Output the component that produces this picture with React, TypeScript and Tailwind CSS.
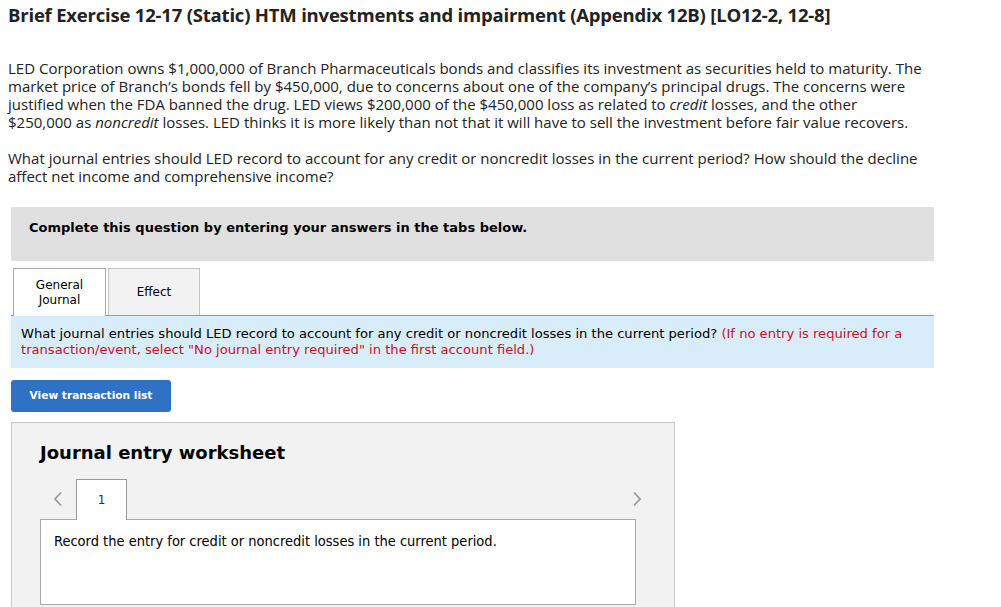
import React from "react";

const sans = "font-['Open_Sans',sans-serif]";
const verdana = "font-['DejaVu_Sans',Verdana,sans-serif]";

const ChevronLeft = () => (
  <svg width="10" height="16" viewBox="0 0 10 16" fill="none">
    <path d="M8 1.5L2 8l6 6.5" stroke="#9a9a9a" strokeWidth="1.8" />
  </svg>
);

const ChevronRight = () => (
  <svg width="10" height="16" viewBox="0 0 10 16" fill="none">
    <path d="M2 1.5L8 8l-6 6.5" stroke="#9a9a9a" strokeWidth="1.8" />
  </svg>
);

export default function App() {
  return (
    <div className="min-h-[607px] bg-white text-[#222] overflow-hidden">
      <div className="pl-2">
        <h1 className={`${sans} text-[18.5px] font-bold leading-[24px] pt-[3px] tracking-[-0.2px] whitespace-nowrap`}>
          Brief Exercise 12-17 (Static) HTM investments and impairment (Appendix 12B) [LO12-2, 12-8]
        </h1>

        <p className={`${sans} text-[15px] leading-[18px] mt-[32px] whitespace-nowrap`}>
          LED Corporation owns $1,000,000 of Branch Pharmaceuticals bonds and classifies its investment as securities held to maturity. The
          <br />
          market price of Branch’s bonds fell by $450,000, due to concerns about one of the company’s principal drugs. The concerns were
          <br />
          justified when the FDA banned the drug. LED views $200,000 of the $450,000 loss as related to <i>credit</i> losses, and the other
          <br />
          $250,000 as <i>noncredit</i> losses. LED thinks it is more likely than not that it will have to sell the investment before fair value recovers.
        </p>

        <p className={`${sans} text-[15px] leading-[18px] mt-[18px] whitespace-nowrap`}>
          What journal entries should LED record to account for any credit or noncredit losses in the current period? How should the decline
          <br />
          affect net income and comprehensive income?
        </p>
      </div>

      <div className="pl-[11px] w-[934px] mt-[22px]">
        <div className={`${verdana} bg-[#e0e0e0] h-[54px] pl-[18px] pt-[13px] text-[13px] leading-[16px] font-bold text-black`}>
          Complete this question by entering your answers in the tabs below.
        </div>

        <div className="flex mt-[7px] pl-[2px] gap-[2px]">
          <div className={`${verdana} w-[93px] h-[48px] bg-white border border-b-0 border-[#aaa] flex items-center justify-center text-center text-[12px] leading-[15px] text-black -mb-px relative z-10`}>
            General
            <br />
            Journal
          </div>
          <div className={`${verdana} w-[92px] h-[47px] bg-[#f2f2f2] border border-b-0 border-[#c4c4c4] flex items-center justify-center text-[12px] text-black`}>
            Effect
          </div>
        </div>

        <div className={`${verdana} bg-[#d9ecf9] border-t border-[#999] h-[53px] pl-[10px] pt-[10px] text-[13.1px] leading-[16px] text-black whitespace-nowrap`}>
          What journal entries should LED record to account for any credit or noncredit losses in the current period?{" "}
          <span className="text-[#c8102e]">
            (If no entry is required for a
            <br />
            transaction/event, select "No journal entry required" in the first account field.)
          </span>
        </div>

        <button className={`${verdana} mt-[12px] w-[160px] h-[32px] rounded-[3px] bg-[#2f72c4] text-white text-[10.6px] font-bold`}>
          View transaction list
        </button>

        <div className="mt-[10px] w-[664px] h-[200px] bg-[#f2f2f2] border border-[#c8c8c8] pl-[28px] pr-[38px]">
          <div className={`${verdana} text-[18px] font-bold text-black mt-[18px] leading-[24px]`}>
            Journal entry worksheet
          </div>

          <div className="flex items-end mt-[14px]">
            <div className="w-[36px] h-[40px] flex items-center justify-center">
              <ChevronLeft />
            </div>
            <div className={`${verdana} w-[51px] h-[41px] bg-white border border-b-0 border-[#999] flex items-center justify-center text-[12px] text-[#1a2a6a] -mb-px relative z-10`}>
              1
            </div>
            <div className="flex-1" />
            <div className="w-[14px] h-[40px] flex items-center justify-center -mr-[8px]">
              <ChevronRight />
            </div>
          </div>

          <div className="bg-white border border-[#aaa] h-[86px] pl-[13px] pt-[12px]">
            <div className="font-['DejaVu_Sans_Condensed','DejaVu_Sans',Tahoma,sans-serif] text-[14.5px] leading-[18px] text-black">
              Record the entry for credit or noncredit losses in the current period.
            </div>
          </div>
        </div>
      </div>
    </div>
  );
}
